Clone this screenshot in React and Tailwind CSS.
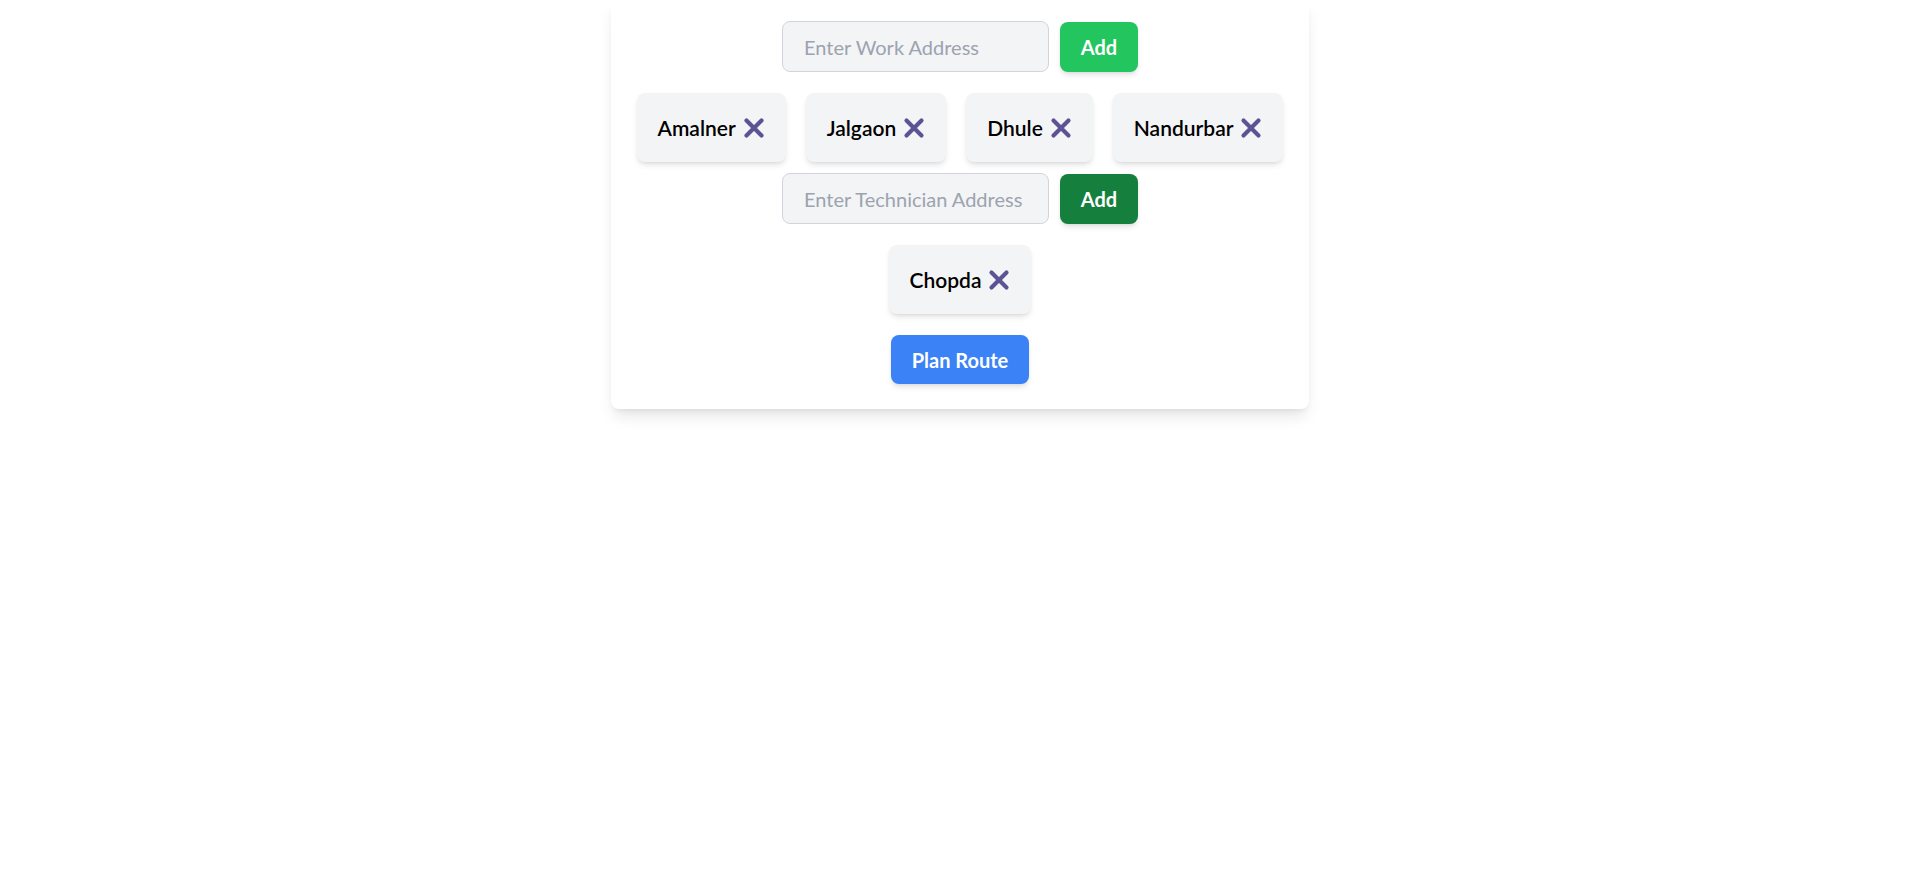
import { useState } from "react";

const XIcon = () => (
  <svg width="22" height="22" viewBox="0 0 22 22" className="shrink-0">
    <path
      d="M3.5 3.5 18.5 18.5 M18.5 3.5 3.5 18.5"
      stroke="#5c5294"
      strokeWidth="4.2"
      strokeLinecap="round"
      fill="none"
    />
  </svg>
);

const Chip = ({ label }) => (
  <div className="flex h-[69px] items-center gap-[7px] rounded-lg bg-[#f3f4f6] px-[21px] text-[21px] font-semibold text-black shadow-md">
    <span>{label}</span>
    <XIcon />
  </div>
);

const AddRow = ({ placeholder, btnClass }) => (
  <div className="flex items-center justify-center gap-[11px]">
    <input
      placeholder={placeholder}
      className="h-[51px] w-[267px] rounded-lg border border-[#d1d5db] bg-[#f3f4f6] px-[21px] text-[20px] text-black placeholder:text-[#9ca3af] outline-none"
    />
    <button
      className={`h-[50px] w-[78px] rounded-lg text-[20px] font-bold text-white shadow-md ${btnClass}`}
    >
      Add
    </button>
  </div>
);

export default function App() {
  const [work] = useState(["Amalner", "Jalgaon", "Dhule", "Nandurbar"]);
  const [techs] = useState(["Chopda"]);

  return (
    <div className="min-h-screen bg-white" style={{ fontFamily: 'Lato, "Open Sans", sans-serif' }}>
      <div className="mx-auto w-[698px] rounded-b-lg bg-white pt-[21px] pb-[25px] shadow-lg">
        <AddRow placeholder="Enter Work Address" btnClass="bg-[#22c55e]" />
        <div className="mt-[21px] flex flex-wrap justify-center gap-[20px]">
          {work.map((w) => (
            <Chip key={w} label={w} />
          ))}
        </div>
        <div className="mt-[11px]">
          <AddRow placeholder="Enter Technician Address" btnClass="bg-[#15803d]" />
        </div>
        <div className="mt-[21px] flex flex-wrap justify-center gap-[20px]">
          {techs.map((t) => (
            <Chip key={t} label={t} />
          ))}
        </div>
        <div className="mt-[21px] flex justify-center">
          <button className="h-[49px] w-[138px] rounded-lg bg-[#3b82f6] text-[20px] font-bold text-white shadow-md">
            Plan Route
          </button>
        </div>
      </div>
    </div>
  );
}
